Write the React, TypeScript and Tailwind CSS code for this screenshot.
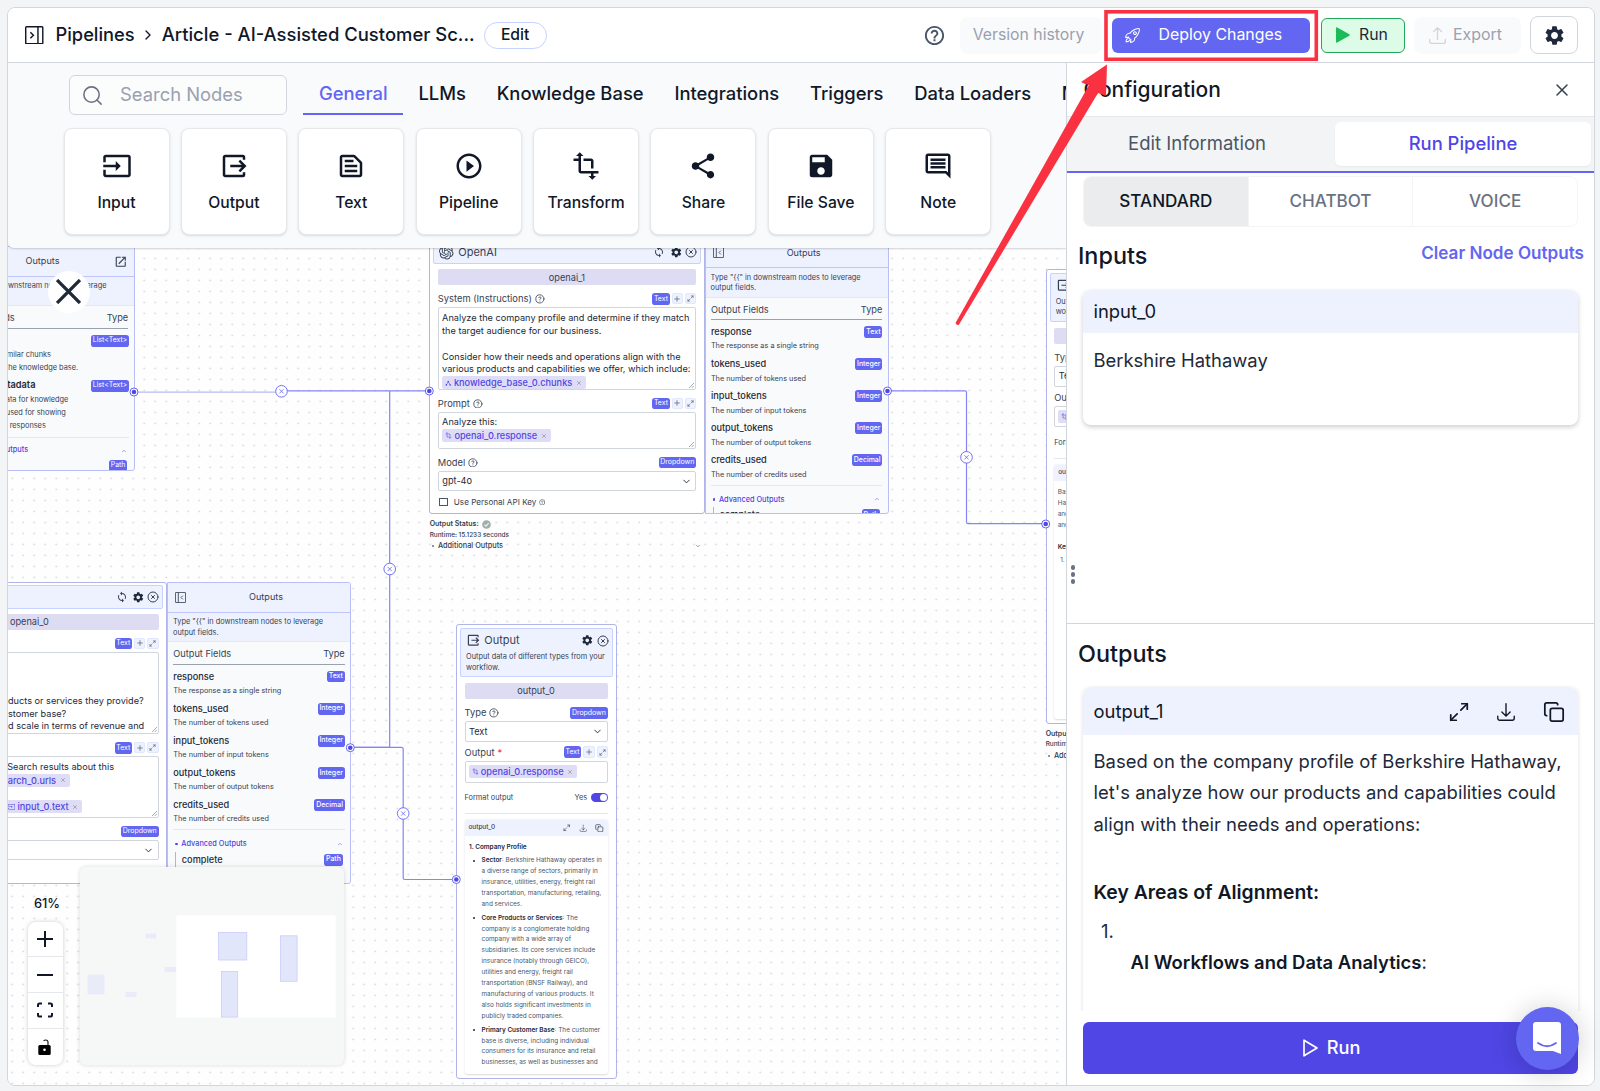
import { ReactNode } from "react";
import clsx from "clsx";
import {
  MdInput,
  MdOutput,
  MdOutlineTextSnippet,
  MdPlayCircleOutline,
  MdTransform,
  MdShare,
  MdSave,
  MdOutlineComment,
  MdHelpOutline,
  MdSettings,
  MdSync,
  MdOutlineOpenInNew,
} from "react-icons/md";
import { IoRocketOutline } from "react-icons/io5";
import { HiOutlineArrowUpTray, HiOutlineArrowDownTray } from "react-icons/hi2";
import { SiOpenai } from "react-icons/si";
import {
  ChevronDown,
  ChevronRight,
  ChevronUp,
  CircleX,
  CircleHelp,
  Copy,
  Maximize2,
  Plus,
  Search,
  X,
} from "lucide-react";

const tabs = [
  "General",
  "LLMs",
  "Knowledge Base",
  "Integrations",
  "Triggers",
  "Data Loaders",
  "Multi-Modal",
];

const nodeTypes = [
  { label: "Input", Icon: MdInput },
  { label: "Output", Icon: MdOutput },
  { label: "Text", Icon: MdOutlineTextSnippet },
  { label: "Pipeline", Icon: MdPlayCircleOutline },
  { label: "Transform", Icon: MdTransform },
  { label: "Share", Icon: MdShare },
  { label: "File Save", Icon: MdSave },
  { label: "Note", Icon: MdOutlineComment },
];

const outputFields = [
  ["response", "The response as a single string", "Text"],
  ["tokens_used", "The number of tokens used", "Integer"],
  ["input_tokens", "The number of input tokens", "Integer"],
  ["output_tokens", "The number of output tokens", "Integer"],
  ["credits_used", "The number of credits used", "Decimal"],
];

const handles = [
  [134, 392],
  [429.3, 391],
  [887.5, 391],
  [1045.7, 524],
  [350.3, 747.7],
  [456.3, 879.5],
];

const edgeButtons = [
  [281.5, 391.3],
  [389.7, 569],
  [966.5, 457.3],
  [403.2, 813.5],
];

function PanelIcon({ size, flip }: { size: number; flip?: boolean }) {
  return (
    <svg
      width={size}
      height={size}
      viewBox="0 0 18 18"
      fill="none"
      stroke="currentColor"
      strokeWidth="1.4"
      className={clsx("shrink-0", flip && "-scale-x-100")}
    >
      <rect x="0.7" y="0.7" width="16.6" height="16.6" rx="0.8" />
      <path d="M12.6 0.7v16.6M5.2 6l3 3-3 3" />
    </svg>
  );
}

function Tag({ children }: { children: ReactNode }) {
  return (
    <span className="flex h-[11.9px] shrink-0 items-center rounded-[2.8px] bg-[#6366f1] px-[1.8px] pt-[0.6px] text-[6.95px] leading-none text-white">
      {children}
    </span>
  );
}

function FieldLabel({
  label,
  tag,
  help = true,
  required,
  actions,
}: {
  label: string;
  tag: string;
  help?: boolean;
  required?: boolean;
  actions?: boolean;
}) {
  return (
    <div className="flex h-[22px] shrink-0 items-end justify-between pb-[2.6px]">
      <span className="flex h-[11.7px] items-center gap-[3px] text-[9.35px] leading-none whitespace-nowrap text-gray-700">
        {label}
        {required && <span className="text-red-500">*</span>}
        {help && <CircleHelp size={9.8} strokeWidth={2} />}
      </span>
      <span className="flex gap-[2px] text-gray-600">
        <Tag>{tag}</Tag>
        {actions && (
          <>
            <span className="flex h-[11.4px] w-[11.2px] items-center justify-center rounded-[2px] border border-indigo-100 bg-indigo-50">
              <Plus size={8} />
            </span>
            <span className="flex h-[11.4px] w-[11.2px] items-center justify-center rounded-[2px] border border-indigo-100 bg-indigo-50">
              <Maximize2 size={7} />
            </span>
          </>
        )}
      </span>
    </div>
  );
}

function Chip({ icon, children }: { icon?: ReactNode; children: ReactNode }) {
  return (
    <span className="flex h-[13px] w-fit items-center gap-[2.3px] rounded-[2px] bg-[#dfddf5] pr-[4px] pl-[3px] text-[9.2px] leading-none font-medium whitespace-nowrap text-[#4f46e5]">
      {icon}
      {children}
      <X size={6} className="ml-[1.3px] text-gray-500" />
    </span>
  );
}

function ResizeGrip() {
  return (
    <svg
      className="absolute right-[1px] bottom-[1px] size-[5px] text-gray-500"
      viewBox="0 0 5 5"
      stroke="currentColor"
      strokeWidth="0.6"
    >
      <path d="M0 5L5 0M2.7 5L5 2.7" />
    </svg>
  );
}

function NameBar({ name }: { name: string }) {
  return (
    <div className="flex h-[16px] shrink-0 items-center justify-center rounded-[2px] bg-[#dddcf3] text-[9.2px] text-gray-700">
      {name}
    </div>
  );
}

function SelectBox({ value }: { value: string }) {
  return (
    <div className="flex h-[20.5px] shrink-0 items-center justify-between rounded-[2px] border border-gray-300 bg-white px-[3.5px] text-[9.2px] text-gray-800">
      {value}
      <ChevronDown size={11} />
    </div>
  );
}

function OutputsPanel({
  icon,
  children,
  titleClass,
}: {
  icon: ReactNode;
  children: ReactNode;
  titleClass?: string;
}) {
  return (
    <div className="flex h-full w-[184px] shrink-0 flex-col overflow-hidden rounded-r-[3px] border border-[#b9bef8] bg-gray-50 text-gray-700">
      <div
        className={clsx(
          "relative flex h-[29.8px] shrink-0 items-center justify-center border-b border-[#c0c5fa] bg-indigo-50 text-[9.1px]",
          titleClass,
        )}
      >
        {icon}
        Outputs
      </div>
      <div className="h-[29.6px] shrink-0 border-b border-indigo-100 bg-indigo-50 px-[5px] pt-[4.6px] text-[7.37px] leading-[10.6px]">
        Type &quot;&#123;&#123;&quot; in downstream nodes to leverage output fields.
      </div>
      <div className="flex grow flex-col px-[5.3px]">
        <div className="flex h-[22.8px] shrink-0 items-center justify-between border-b border-gray-400 pt-[2.6px] text-[9.2px]">
          <span>Output Fields</span>
          <span>Type</span>
        </div>
        {children}
      </div>
    </div>
  );
}

function OpenAiOutputs() {
  return (
    <OutputsPanel
      titleClass="pl-[14px]"
      icon={
        <span className="absolute top-[9px] left-[7px]">
          <PanelIcon size={11} flip />
        </span>
      }
    >
      <div className="mt-[4px] shrink-0 border-b border-gray-200">
        {outputFields.map(([name, description, type]) => (
          <div key={name} className="h-[32.1px]">
            <div className="flex h-[15px] items-center justify-between text-[9.2px] font-medium text-gray-800">
              {name}
              <Tag>{type}</Tag>
            </div>
            <div className="h-[12px] text-[7.32px] leading-[13px]">{description}</div>
          </div>
        ))}
      </div>
      <div className="mt-[8px] flex h-[11px] shrink-0 items-center pl-[2px] text-[7.35px] font-medium text-[#4f46e5]">
        <span className="mr-[3.5px] size-[2.5px] rounded-full bg-[#4f46e5]" />
        Advanced Outputs
        <ChevronUp size={6} className="mr-[2px] ml-auto" />
      </div>
      <div className="mt-[2.2px] ml-[2px] flex h-[16px] shrink-0 items-center justify-between border-l border-indigo-300 pr-[2px] pl-[5.5px] text-[9.2px] font-medium text-gray-800">
        complete
        <Tag>Path</Tag>
      </div>
    </OutputsPanel>
  );
}

function NodeStatus() {
  return (
    <div className="text-gray-700">
      <div className="flex h-[10.5px] items-center gap-[3px] text-[7px] font-semibold">
        Output Status:
        <svg viewBox="0 0 10 10" className="size-[9px]">
          <circle cx="5" cy="5" r="4.8" fill="#9fb0aa" />
          <path d="M2.8 5.2l1.6 1.6 3-3.3" fill="none" stroke="#e9fbee" strokeWidth="1.3" />
        </svg>
      </div>
      <div className="text-[6.45px] leading-[10.5px] font-medium">Runtime: 15.1233 seconds</div>
      <div className="flex h-[12px] items-center text-[7.35px] font-medium">
        <span className="mr-[4.2px] ml-[2px] size-[2px] rounded-full bg-gray-500" />
        Additional Outputs
        <ChevronDown size={6} className="mr-[4px] ml-auto" />
      </div>
    </div>
  );
}

function OpenAiNode({
  name,
  className,
  system,
  prompt,
}: {
  name: string;
  className: string;
  system: ReactNode;
  prompt: ReactNode;
}) {
  return (
    <div className={clsx("absolute flex w-[459.3px]", className)}>
      <div className="flex h-full w-[275.3px] shrink-0 flex-col rounded-[3px] border-[1.5px] border-[#b0b4ea] bg-white px-[3px] pt-[2.5px]">
        <div className="flex h-[23.3px] shrink-0 items-center rounded-[2px] border border-indigo-200 bg-indigo-50 pr-[3px] pl-[5px] text-[11px] text-gray-700">
          <SiOpenai size={14.5} className="mr-[4.5px]" />
          OpenAI
          <MdSync size={12} className="mr-[4.5px] ml-auto" />
          <MdSettings size={12.5} className="mr-[2.5px] text-gray-800" />
          <CircleX size={12} strokeWidth={2} />
        </div>
        <div className="flex flex-col px-[4.5px] pt-[5.4px]">
          <NameBar name={name} />
          <FieldLabel label="System (Instructions)" tag="Text" actions />
          <div className="relative h-[82.5px] shrink-0 overflow-hidden rounded-[2px] border border-gray-300 px-[3.3px] pt-[3.6px] text-[9.17px] leading-[12.85px] whitespace-nowrap text-gray-800">
            {system}
            <ResizeGrip />
          </div>
          <FieldLabel label="Prompt" tag="Text" actions />
          {prompt}
          <FieldLabel label="Model" tag="Dropdown" />
          <SelectBox value="gpt-4o" />
          <div className="flex h-[21px] items-center text-[8.15px] text-gray-700">
            <span className="mr-[6px] ml-[1.5px] size-[8.5px] border border-gray-600" />
            Use Personal API Key
            <CircleHelp size={6.5} className="ml-[2.5px]" />
          </div>
        </div>
      </div>
      <OpenAiOutputs />
    </div>
  );
}

function OutputNode({
  name,
  className,
  children,
}: {
  name: string;
  className: string;
  children: ReactNode;
}) {
  return (
    <div className={clsx("absolute w-[161px]", className)}>
      <div className="flex h-[454.5px] flex-col rounded-[3px] border-[1.5px] border-[#b0b4ea] bg-white px-[3px] pt-[3.2px]">
        <div className="h-[48.7px] shrink-0 rounded-[2px] border border-indigo-200 bg-indigo-50 pr-[3.5px] pl-[5px] text-gray-700">
          <div className="mt-[3.7px] flex h-[15px] items-center text-[11px]">
            <MdOutput size={14.5} className="mr-[3.8px]" />
            Output
            <MdSettings size={12.5} className="mr-[2.8px] ml-auto text-gray-800" />
            <CircleX size={12} />
          </div>
          <div className="mt-[4px] text-[7.36px] leading-[10.5px]">
            Output data of different types from your workflow.
          </div>
        </div>
        <div className="flex grow flex-col pt-[6.2px] pr-[5.3px] pb-[4px] pl-[4.5px]">
          <NameBar name={name} />
          <FieldLabel label="Type" tag="Dropdown" />
          <SelectBox value="Text" />
          <div className="-mt-[2.9px]">
            <FieldLabel label="Output" tag="Text" help={false} required actions />
          </div>
          <div className="flex h-[21.7px] shrink-0 items-center rounded-[2px] border border-gray-300 px-[3px]">
            <Chip icon={<MdTransform size={7} />}>openai_0.response</Chip>
          </div>
          <div className="mt-[6.8px] flex h-[16px] items-center justify-between text-[7.35px] text-gray-700">
            Format output
            <span className="flex items-center gap-[4px]">
              Yes
              <span className="flex h-[9px] w-[16.5px] items-center justify-end rounded-full bg-[#4f46e5] pr-[1px]">
                <span className="size-[7px] rounded-full bg-white" />
              </span>
            </span>
          </div>
          <div className="mt-[8px] border-t border-gray-200" />
          <div className="mt-[5.8px] flex min-h-0 grow flex-col overflow-hidden rounded-[3px] bg-white shadow-[0_0.5px_2px_rgba(0,0,0,0.15)]">
            <div className="flex h-[15.7px] shrink-0 items-center bg-indigo-50 pr-[4px] pl-[4px] text-[6.4px] font-medium text-gray-700">
              {name}
              <Maximize2 size={7.5} className="mr-[8.5px] ml-auto" />
              <HiOutlineArrowDownTray size={8.5} className="mr-[8px]" />
              <Copy size={8.5} />
            </div>
            {children}
          </div>
        </div>
      </div>
      <div className="pt-[5px]">
        <NodeStatus />
      </div>
    </div>
  );
}

function KnowledgeBaseNode() {
  return (
    <div className="absolute top-[182.8px] -left-[57.5px] h-[225.2px]">
      <OutputsPanel
        icon={<MdOutlineOpenInNew size={13.5} className="absolute top-[8px] right-[6px]" />}
      >
        <div className="-mx-[1px] pl-[50px] text-[7.37px] leading-[12.8px] whitespace-nowrap">
          <div className="mt-[5.7px] flex justify-end">
            <Tag>{"List<Text>"}</Tag>
          </div>
          <div className="mt-[2.5px] pl-[1px]">milar chunks</div>
          <div>the knowledge base.</div>
          <div className="mt-[5px] flex h-[12px] items-center justify-between pl-[1.5px] text-[9.2px] font-semibold text-gray-800">
            tadata
            <Tag>
              <span className="font-normal">{"List<Text>"}</span>
            </Tag>
          </div>
          <div className="mt-[2.3px]">ata for knowledge</div>
          <div>used for showing</div>
          <div>l responses</div>
          <div className="mt-[5px] flex items-center justify-between border-t border-gray-200 pt-[6px] pr-[2px] font-medium text-[#4f46e5]">
            utputs
            <ChevronUp size={6} />
          </div>
          <div className="mt-[2.5px] flex justify-end pr-[2px]">
            <Tag>Path</Tag>
          </div>
        </div>
      </OutputsPanel>
    </div>
  );
}

// Connections between nodes, drawn in window coordinates
function Edges() {
  return (
    <svg
      className="pointer-events-none absolute inset-0 h-full w-full"
      viewBox="8 63 1058 1022"
      fill="none"
      stroke="#8386f3"
      strokeWidth="1.2"
    >
      <path d="M134 392.2H281" stroke="#b7bbf7" />
      <path d="M281 390.8H429" />
      <path d="M350 747.3H389.7V391" />
      <path d="M350 747.3H401.5Q403.2 747.3 403.2 749V878Q403.2 879.5 405 879.5H456" />
      <path d="M887 390.8H965Q966.5 390.8 966.5 392.5V522Q966.5 523.7 968 523.7H1045" />
      {handles.map(([x, y]) => (
        <g key={`${x}-${y}`}>
          <circle cx={x} cy={y} r="4" fill="#fff" stroke="#6366f1" strokeWidth="1" />
          <circle cx={x} cy={y} r="2.3" fill="#4f46e5" stroke="none" />
        </g>
      ))}
      {edgeButtons.map(([x, y]) => (
        <g key={`${x}-${y}`} transform={`translate(${x} ${y})`} stroke="#7073f2">
          <circle r="5.8" fill="#fff" strokeWidth="1" />
          <path d="M-2.1 -2.1L2.1 2.1M2.1 -2.1L-2.1 2.1" strokeWidth="0.9" />
        </g>
      ))}
    </svg>
  );
}

function Header() {
  return (
    <header className="flex h-[55px] shrink-0 items-center border-b border-gray-300 bg-white pr-[16px] pl-[17px] text-gray-900">
      <PanelIcon size={18.5} />
      <span className="ml-[12px] text-[18.3px] font-medium">Pipelines</span>
      <ChevronRight size={16} className="mx-[5.5px]" />
      <span className="text-[18.45px] font-medium whitespace-nowrap">
        Article - AI-Assisted Customer Sc...
      </span>
      <button className="ml-[9px] h-[27px] w-[63px] rounded-full border border-indigo-200 text-[15.7px] font-medium">
        Edit
      </button>
      <MdHelpOutline size={23} className="ml-auto text-gray-600" />
      <button className="ml-[14px] h-[37px] w-[142px] rounded-lg bg-gray-50 pr-[5px] text-[15.8px] text-gray-400">
        Version history
      </button>
      <button className="ml-[10px] flex h-[35px] w-[198px] items-center rounded-md bg-[#6366f1] pl-[12px] text-[15.9px] text-white">
        <IoRocketOutline size={17} className="mr-[17.5px]" />
        Deploy Changes
      </button>
      <button className="ml-[10.5px] flex h-[35px] w-[84px] items-center rounded-md border border-[#22a85a] bg-[#dcfce7] pl-[14px] text-[15.8px] text-gray-800">
        <svg viewBox="0 0 14 16" className="mr-[9.5px] h-[16px] w-[14px] fill-[#1dbb58]">
          <path d="M0 1.2Q0 0 1.2 0.5L13.3 7.2Q14.3 8 13.3 8.8L1.2 15.5Q0 16 0 14.8Z" />
        </svg>
        Run
      </button>
      <button className="ml-[9.5px] flex h-[37px] w-[107px] items-center rounded-lg bg-gray-50 pl-[12.5px] text-[15.9px] text-gray-400">
        <HiOutlineArrowUpTray size={21} className="mr-[5.5px] text-gray-300" />
        Export
      </button>
      <button className="ml-[9px] flex h-[38px] w-[48px] items-center justify-center rounded-lg border border-gray-300 bg-white text-gray-800">
        <MdSettings size={23} />
      </button>
    </header>
  );
}

function Toolbar() {
  return (
    <div className="absolute inset-x-0 top-0 h-[185px] overflow-hidden rounded-bl-md bg-gray-50 pl-[55.5px] text-gray-900 shadow-[0_1px_2px_rgba(0,0,0,0.18)]">
      <div className="mt-[12px] flex items-center">
        <div className="ml-[5.5px] flex h-[40px] w-[218px] shrink-0 items-center rounded-md border border-gray-300 bg-white/40 pl-[10.5px] text-[18.4px] text-gray-400">
          <Search size={23} strokeWidth={1.6} className="mr-[16.5px] text-gray-500" />
          Search Nodes
        </div>
        <nav className="ml-[16px] flex self-stretch">
          {tabs.map((tab, i) => (
            <span
              key={tab}
              className={clsx(
                "flex h-[40px] items-center border-b-[2.5px] text-[18.4px] font-medium whitespace-nowrap",
                i === 0
                  ? "border-[#6366f1] pr-[15.5px] pl-4 text-[#6366f1]"
                  : "border-transparent px-[15.4px]",
              )}
            >
              <span className="-mt-[1px]">{tab}</span>
            </span>
          ))}
        </nav>
      </div>
      <div className="mt-[13px] flex gap-[11.4px]">
        {nodeTypes.map(({ label, Icon }) => (
          <div
            key={label}
            className="flex h-[107px] w-[106px] flex-col items-center rounded-lg border border-gray-200 bg-white pt-[22px] text-[15.7px] font-medium shadow-sm"
          >
            <Icon size={30} />
            <span className="mt-[10px] leading-[24px]">{label}</span>
          </div>
        ))}
      </div>
    </div>
  );
}

function Canvas() {
  return (
    <main className="relative w-[1058px] shrink-0 overflow-hidden bg-[#fefefe] bg-[radial-gradient(#d3d5dd_0.8px,transparent_1.1px)] bg-[size:11px_11px] bg-[position:-1.3px_2.9px]">
      <KnowledgeBaseNode />

      <OpenAiNode
        name="openai_1"
        className="top-[174.3px] left-[421.3px] h-[277px]"
        system={
          <>
            Analyze the company profile and determine if they match
            <br />
            the target audience for our business.
            <br />
            <br />
            Consider how their needs and operations align with the
            <br />
            various products and capabilities we offer, which include:
            <Chip icon={<MdShare size={6.5} className="rotate-90" />}>
              knowledge_base_0.chunks
            </Chip>
          </>
        }
        prompt={
          <div className="relative h-[37px] shrink-0 rounded-[2px] border border-gray-300 px-[3.3px] pt-[3.2px] text-[9.15px] leading-[12.9px] text-gray-800">
            Analyze this:
            <Chip icon={<MdTransform size={7} />}>openai_0.response</Chip>
            <ResizeGrip />
          </div>
        }
      />
      <div className="absolute top-[456px] left-[421.7px] w-[275px]">
        <NodeStatus />
      </div>

      <OpenAiNode
        name="openai_0"
        className="top-[518.8px] -left-[116.3px] h-[301.8px]"
        system={
          <div className="pt-[38.2px] pl-[103.5px]">
            ducts or services they provide?
            <br />
            stomer base?
            <br />d scale in terms of revenue and
          </div>
        }
        prompt={
          <div className="relative h-[61.5px] shrink-0 rounded-[2px] border border-gray-300 pt-[3px] pl-[103.5px] text-[9.15px] leading-[13.2px] whitespace-nowrap text-gray-800">
            <div className="pl-[2.5px]">Search results about this</div>
            <Chip>arch_0.urls</Chip>
            <div className="mt-[13.8px]">
              <Chip icon={<MdInput size={7.5} />}>input_0.text</Chip>
            </div>
            <ResizeGrip />
          </div>
        }
      />

      <OutputNode name="output_0" className="top-[561.3px] left-[448px]">
        <div className="min-h-0 grow overflow-hidden pt-[5.9px] pl-[4.5px] text-[6.42px] leading-[10.95px] whitespace-nowrap text-gray-600">
          <p className="font-semibold text-gray-800">1. Company Profile</p>
          <ul className="ml-[12.5px] [&_b]:font-semibold [&_b]:text-gray-800 [&>li]:relative [&>li]:mt-[2.5px] [&>li]:before:absolute [&>li]:before:top-[4.4px] [&>li]:before:-left-[8.5px] [&>li]:before:size-[2.4px] [&>li]:before:rounded-full [&>li]:before:bg-gray-800">
            <li>
              <b>Sector</b>: Berkshire Hathaway operates in
              <br />a diverse range of sectors, primarily in
              <br />
              insurance, utilities, energy, freight rail
              <br />
              transportation, manufacturing, retailing,
              <br />
              and services.
            </li>
            <li>
              <b>Core Products or Services</b>: The
              <br />
              company is a conglomerate holding
              <br />
              company with a wide array of
              <br />
              subsidiaries. Its core services include
              <br />
              insurance (notably through GEICO),
              <br />
              utilities and energy, freight rail
              <br />
              transportation (BNSF Railway), and
              <br />
              manufacturing of various products. It
              <br />
              also holds significant investments in
              <br />
              publicly traded companies.
            </li>
            <li>
              <b>Primary Customer Base</b>: The customer
              <br />
              base is diverse, including individual
              <br />
              consumers for its insurance and retail
              <br />
              businesses, as well as businesses and
            </li>
          </ul>
        </div>
      </OutputNode>

      <OutputNode name="output_1" className="top-[206px] left-[1037.7px]">
        <div className="pt-[6.5px] pl-[3.5px] text-[6.42px] leading-[11px] text-gray-600">
          Based on the company profile of
          <br />
          Hathaway, let&apos;s analyze how our
          <br />
          and capabilities could align with
          <br />
          and operations:
          <p className="mt-[10.8px] font-semibold text-gray-800">Key Areas of Alignment:</p>
          <p className="mt-[2.2px] pl-[2.5px]">1.</p>
        </div>
      </OutputNode>

      <Edges />

      <button className="absolute top-[207.5px] left-[39.5px] flex size-[42px] items-center justify-center rounded-full bg-white text-gray-800">
        <svg viewBox="0 0 24 24" className="size-[25px]" stroke="currentColor" strokeWidth="3.2">
          <path d="M1 1L23 23M23 1L1 23" />
        </svg>
      </button>

      <Toolbar />
      <Minimap />
      <ZoomControls />
    </main>
  );
}

function Minimap() {
  return (
    <div className="absolute top-[803.5px] left-[72.4px] h-[198.5px] w-[264px] rounded-md bg-[#f6f8f8] shadow-[0_0_4px_rgba(0,0,0,0.16)]">
      <svg viewBox="80.5 866.5 264 198.5" className="h-full w-full">
        <g fill="#e9ebf9">
          <rect x="88" y="974" width="17" height="20" />
          <rect x="146" y="933" width="11" height="5" />
          <rect x="165" y="966.5" width="11.5" height="5" />
          <rect x="126" y="991.5" width="11" height="5" />
        </g>
        <rect x="177" y="915" width="159" height="102" fill="#fff" />
        <g fill="#e2e6fb" stroke="#c9cdf9" strokeWidth="0.8">
          <rect x="219" y="932" width="28.3" height="27.5" />
          <rect x="281" y="935.3" width="16.6" height="45.5" />
          <rect x="222" y="971" width="16.2" height="45.6" />
        </g>
      </svg>
    </div>
  );
}

function ZoomControls() {
  return (
    <div className="absolute top-[831.5px] left-[19.5px] flex w-[35px] flex-col items-center text-gray-900">
      <span className="pl-[4px] text-[12.8px] leading-[18px] font-medium">61%</span>
      <div className="mt-[9px] w-full divide-y divide-gray-200 overflow-hidden rounded-lg bg-white shadow-[0_0_4px_rgba(0,0,0,0.2)]">
        <button className="flex h-[35.8px] w-full items-center justify-center">
          <svg viewBox="0 0 16 16" className="size-[16px]" stroke="currentColor" strokeWidth="2">
            <path d="M0 8h16M8 0v16" />
          </svg>
        </button>
        <button className="flex h-[35.8px] w-full items-center justify-center">
          <svg viewBox="0 0 16 16" className="size-[16px]" stroke="currentColor" strokeWidth="2">
            <path d="M0 8h16" />
          </svg>
        </button>
        <button className="flex h-[35.8px] w-full items-center justify-center">
          <svg
            viewBox="0 0 16 16"
            className="size-[16px]"
            fill="none"
            stroke="currentColor"
            strokeWidth="2"
          >
            <path d="M1 5V3Q1 1.5 2.5 1.5H5M11 1.5h2.5Q15 1.5 15 3v2M15 11v2q0 1.5-1.5 1.5H11M5 14.5H2.5Q1 14.5 1 13v-2" />
          </svg>
        </button>
        <button className="flex h-[35.8px] w-full items-center justify-center">
          <svg viewBox="0 0 13 16" className="mr-[1px] h-[16px] w-[13px]">
            <rect x="0.3" y="6" width="12.4" height="10" rx="1.5" />
            <path
              d="M10 7V3.2Q10 1 7.8 1Q6.4 1 5.6 2"
              fill="none"
              stroke="currentColor"
              strokeWidth="1.2"
            />
            <circle cx="6.5" cy="10.8" r="1.3" fill="#fff" />
          </svg>
        </button>
      </div>
    </div>
  );
}

function ConfigPanel() {
  return (
    <aside className="flex min-w-0 grow flex-col border-l border-gray-300 bg-white text-gray-900">
      <div className="flex h-[54px] shrink-0 items-center justify-between border-b border-gray-200 pr-[22px] pl-[16.5px]">
        <h2 className="text-[21px] font-medium">Configuration</h2>
        <X size={20} strokeWidth={1.8} className="text-gray-700" />
      </div>
      <div className="flex h-[55.5px] shrink-0 border-b-[2.5px] border-[#6366f1] bg-gray-100 pt-[5px] pr-[3px] pb-[5px]">
        <button className="w-[268px] text-[18.5px] text-gray-600">
          <span className="-ml-[8px]">Edit Information</span>
        </button>
        <button className="grow rounded-md bg-white text-[18.4px] font-medium text-[#4f46e5] shadow-xs">
          Run Pipeline
        </button>
      </div>
      <div className="mx-[16px] mt-[3px] flex h-[51px] shrink-0 divide-x divide-gray-100 overflow-hidden rounded-lg border border-gray-100 text-[17.1px] font-medium text-gray-500 *:flex-1">
        <button className="bg-[#ebecee] pb-[1px] text-gray-900">STANDARD</button>
        <button className="pb-[1px]">CHATBOT</button>
        <button className="pb-[1px]">VOICE</button>
      </div>

      <section className="relative flex h-[397px] shrink-0 flex-col border-b border-gray-300 px-[16px]">
        <div className="-mx-[5px] flex items-start justify-between pt-[12.5px]">
          <h3 className="text-[23.4px] leading-[34px] font-medium">Inputs</h3>
          <button className="-mr-[1px] text-[17.1px] leading-[27px] font-semibold text-[#6366f1]">
            Clear Node Outputs
          </button>
        </div>
        <div className="mt-[17px] h-[135px] overflow-hidden rounded-lg bg-white text-[18.4px] shadow-[0_2px_5px_rgba(0,0,0,0.2)]">
          <div className="flex h-[42.5px] items-center bg-indigo-50 px-[10.5px] pt-[0.5px]">
            input_0
          </div>
          <div className="px-[10.5px] pt-[13.2px] leading-[28px] text-gray-800">
            Berkshire Hathaway
          </div>
        </div>
        <div className="absolute top-[338.8px] left-[3.5px] flex flex-col gap-[2.7px]">
          <span className="size-[4.4px] rounded-full bg-gray-500" />
          <span className="size-[4.4px] rounded-full bg-gray-500" />
          <span className="size-[4.4px] rounded-full bg-gray-500" />
        </div>
      </section>

      <section className="flex min-h-0 grow flex-col">
        <h3 className="pt-[12px] pl-[11px] text-[23.4px] leading-[36px] font-medium">Outputs</h3>
        <div className="mt-[13.5px] h-[326px] overflow-hidden px-[16px] pt-[3px]">
          <div className="h-[400px] overflow-hidden rounded-lg shadow-[0_0_4px_rgba(0,0,0,0.13)]">
            <div className="flex h-[47px] items-center bg-indigo-50 pr-[13.5px] pl-[10.5px] text-[18.4px]">
              output_1
              <Maximize2 size={22} strokeWidth={1.9} className="mr-[25.5px] ml-auto" />
              <HiOutlineArrowDownTray size={22} className="mr-[25.5px]" />
              <Copy size={22} strokeWidth={1.9} />
            </div>
            <div className="px-[10.5px] pt-[10.6px] text-[18.45px] leading-[31.6px] whitespace-nowrap text-gray-800">
              <p>
                Based on the company profile of Berkshire Hathaway,
                <br />
                let&apos;s analyze how our products and capabilities could
                <br />
                align with their needs and operations:
              </p>
              <p className="mt-[36.4px] text-[19.35px] font-semibold text-gray-900">
                Key Areas of Alignment:
              </p>
              <p className="mt-[7.5px] pl-[7.5px]">1.</p>
              <p className="pl-[37px]">
                <span className="font-semibold text-gray-900">AI Workflows and Data Analytics</span>:
              </p>
            </div>
          </div>
        </div>
        <button className="mx-[16px] mt-[11px] flex h-[52px] shrink-0 items-center justify-center gap-[9px] rounded-md bg-[#4f46e5] pl-[2px] text-[18.2px] font-medium text-white">
          <svg
            viewBox="0 0 15 18"
            className="h-[18px] w-[15px]"
            fill="none"
            stroke="currentColor"
            strokeWidth="1.7"
            strokeLinejoin="round"
          >
            <path d="M1 1.2V16.8L14 9Z" />
          </svg>
          Run
        </button>
      </section>
    </aside>
  );
}

export default function App() {
  return (
    <div className="relative h-[1091px] w-[1600px] overflow-hidden bg-gray-100 pt-[7px] pl-[7px] font-['Inter',sans-serif]">
      <div className="flex h-[1079px] w-[1588px] flex-col overflow-hidden rounded-lg border border-gray-300 bg-white">
        <Header />
        <div className="flex min-h-0 grow">
          <Canvas />
          <ConfigPanel />
        </div>
      </div>

      <button className="absolute top-[1006.5px] left-[1515.5px] flex size-[63px] items-center justify-center rounded-full bg-[#6366f1] shadow-[0_2px_28px_rgba(0,0,0,0.2)]">
        <svg viewBox="0 0 28 32" className="h-[32px] w-[28px]">
          <path
            d="M3 0H25Q28 0 28 3V32Q24 30.5 20 29H3Q0 29 0 26V3Q0 0 3 0Z"
            fill="#fff"
          />
          <path
            d="M5 21Q14 27.5 23 21"
            fill="none"
            stroke="#6366f1"
            strokeWidth="1.8"
            strokeLinecap="round"
          />
        </svg>
      </button>

      {/* callout around the deploy button */}
      <svg
        className="pointer-events-none absolute inset-0 h-full w-full"
        viewBox="0 0 1600 1091"
      >
        <rect
          x="1106"
          y="11.8"
          width="210.3"
          height="47.5"
          fill="none"
          stroke="#fa3140"
          strokeWidth="3.6"
        />
        <path
          d="M1107 64.5L1081 82Q1084 84 1089 85L955.5 323Q957 326 959 324.5L1098 93Q1101 94 1106 96Z"
          fill="#fa3140"
        />
      </svg>
    </div>
  );
}
